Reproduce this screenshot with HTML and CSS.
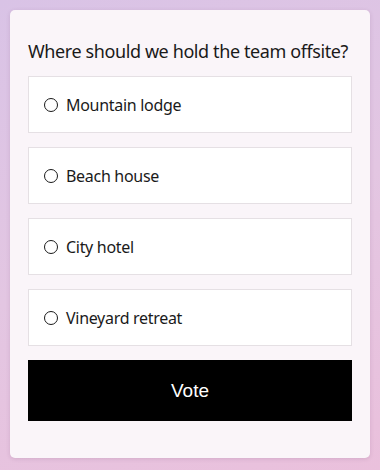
FILE: index.html
```html
<!DOCTYPE html>
<html lang="en">
<head>
    <meta charset="UTF-8">
    <meta name="viewport" content="width=device-width, initial-scale=1.0">
    <title>Team Offsite Poll</title>
    <link rel="stylesheet" href="styles.css">
</head>
<body>
    <div class="card">
        <h1 class="question">Where should we hold the team offsite?</h1>
        <form class="poll">
            <label class="option"><span class="radio"></span>Mountain lodge</label>
            <label class="option"><span class="radio"></span>Beach house</label>
            <label class="option"><span class="radio"></span>City hotel</label>
            <label class="option"><span class="radio"></span>Vineyard retreat</label>
            <button type="button" class="vote">Vote</button>
        </form>
    </div>
</body>
</html>
```

FILE: styles.css
```css
html, body {
    height: 100%;
}
body {
    margin: 0;
    padding: 10px;
    box-sizing: border-box;
    font-family: "Noto Sans", "Open Sans", sans-serif;
    background: linear-gradient(160deg, #d9c3e6 0%, #e3c6e2 50%, #eac0dc 100%);
}
.card {
    height: 448px;
    box-sizing: border-box;
    padding: 28px 18px 18px;
    background: #faf5f9;
    border-radius: 5px;
    box-shadow: 0 1px 4px rgba(90, 40, 90, 0.15);
}
.question {
    margin: 0 0 12px;
    font-size: 18px;
    letter-spacing: -0.4px;
    font-weight: normal;
    line-height: 26px;
    color: #1a1a1a;
    white-space: nowrap;
}
.poll {
    display: flex;
    flex-direction: column;
    gap: 14px;
}
.option {
    display: flex;
    align-items: center;
    height: 57px;
    box-sizing: border-box;
    padding-left: 15px;
    background: #fff;
    border: 1px solid #e5e0e4;
    font-size: 16px;
    letter-spacing: -0.3px;
    color: #1a1a1a;
}
.radio {
    width: 14px;
    height: 14px;
    box-sizing: border-box;
    border: 1.6px solid #1a1a1a;
    border-radius: 50%;
    margin-right: 8px;
}
.vote {
    height: 61px;
    border: none;
    background: #000;
    color: #fff;
    font-family: "Liberation Sans", Arial, sans-serif;
    font-size: 19px;
    cursor: pointer;
}
```
